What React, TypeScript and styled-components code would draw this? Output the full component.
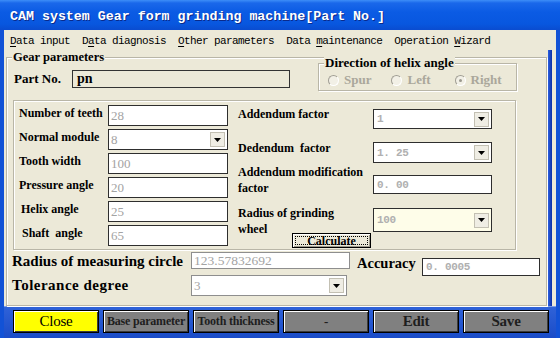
import React from 'react';
import styled, { createGlobalStyle } from 'styled-components';

const SERIF = `"Liberation Serif", "Times New Roman", serif`;
const MONO = `"Liberation Mono", "Courier New", monospace`;

const GlobalStyle = createGlobalStyle`
  html, body {
    margin: 0;
    padding: 0;
  }
  body {
    width: 560px;
    height: 338px;
    overflow: hidden;
    background: #1252d6;
  }
`;

const Window = styled.div`
  width: 560px;
  height: 338px;
  display: flex;
  flex-direction: column;
  background: #1252d6;
  overflow: hidden;
`;

const TitleBar = styled.div`
  height: 30px;
  flex: none;
  box-sizing: border-box;
  display: flex;
  align-items: center;
  padding: 3px 0 0 10px;
  background: linear-gradient(to bottom, #3d8ef8 0px, #1a68ea 3px, #0b5be4 12px, #0857df 24px, #0a4cd0 30px);
  font: bold 13.3px ${MONO};
  color: #fff;
  text-shadow: 1px 1px 0 #0a2a8a;
  white-space: pre;
`;

const Body = styled.div`
  flex: 1;
  display: flex;
  flex-direction: column;
  padding: 0 4px;
`;

const MenuBar = styled.div`
  height: 20px;
  flex: none;
  display: flex;
  align-items: center;
  gap: 12px;
  padding: 1px 0 0 6px;
  box-sizing: border-box;
  background: #ece9d8;
  font: 11px ${MONO};
  letter-spacing: -0.6px;
  color: #000;
  white-space: pre;
`;

const Key = styled.span`
  text-decoration: underline;
  text-underline-offset: 2px;
`;

const MainRow = styled.div`
  height: 256px;
  flex: none;
  display: flex;
`;

const FormPanel = styled.div`
  width: 544px;
  box-sizing: border-box;
  padding: 7px 1px 0 2px;
  background: #ece9d8;
`;

const EdgeStrip = styled.div`
  width: 4px;
  background: linear-gradient(to right, #2a5ee0, #0b2ea4);
`;

const EdgeGap = styled.div`
  width: 4px;
  background: #ece9d8;
`;

const GroupBox = styled.div<{ $w?: number; $h: number }>`
  position: relative;
  box-sizing: border-box;
  ${({ $w }) => ($w ? `width: ${$w}px;` : '')}
  height: ${({ $h }) => $h}px;
  border: 1px solid #b9b6a7;
  box-shadow: inset 1px 1px 0 #fff, 1px 1px 0 #fff;
`;

const Caption = styled.span<{ $size: number }>`
  position: absolute;
  top: -8px;
  left: 5px;
  padding: 0 1px;
  background: #ece9d8;
  font: bold ${({ $size }) => $size}px ${SERIF};
  line-height: 14px;
  color: #000;
  white-space: pre;
`;

const OuterBox = styled(GroupBox)`
  padding-left: 6px;
  display: flex;
  flex-direction: column;
`;

const TopRow = styled.div`
  height: 33px;
  display: flex;
  align-items: flex-start;
`;

const PartGroup = styled.div`
  display: flex;
  align-items: center;
  margin-top: 12px;
  margin-left: 1px;
`;

const PartLabel = styled.span`
  width: 58px;
  font: bold 13px ${SERIF};
  color: #000;
`;

const PartInput = styled.div`
  width: 218px;
  height: 18px;
  box-sizing: border-box;
  border: 1px solid #333;
  padding: 0 4px;
  background: #ece9d8;
  font: bold 14px ${SERIF};
  line-height: 16px;
  color: #000;
`;

const DirectionBox = styled(GroupBox)`
  margin: 5px 0 0 28px;
  padding: 6px 0 0 9px;
  display: flex;
  align-items: center;
  gap: 20px;
`;

const RadioItem = styled.span<{ $ml?: number }>`
  display: flex;
  align-items: center;
  gap: 5px;
  margin-left: ${({ $ml }) => $ml ?? 0}px;
  font: bold 13px ${SERIF};
  color: #aaa79b;
`;

const RadioCircle = styled.span<{ $checked?: boolean }>`
  width: 11px;
  height: 11px;
  box-sizing: border-box;
  border-radius: 50%;
  border: 1px solid;
  border-color: #a09e94 #fff #fff #a09e94;
  background: #f2f0e6;
  display: flex;
  align-items: center;
  justify-content: center;

  &::after {
    content: '';
    width: 3px;
    height: 3px;
    border-radius: 50%;
    background: ${({ $checked }) => ($checked ? '#9a988e' : 'transparent')};
  }
`;

const FieldsBox = styled(GroupBox)`
  margin-top: 9px;
  padding: 4px 0 0 5px;
  display: flex;
  align-items: flex-start;
`;

const LeftGrid = styled.div`
  display: grid;
  grid-template-columns: 89px 120px;
  grid-auto-rows: 21px;
  row-gap: 3px;
  align-items: start;
`;

const FieldLabel = styled.span<{ $indent?: number; $lh?: number; $mt?: number }>`
  display: block;
  margin-top: ${({ $mt }) => $mt ?? 0}px;
  padding-left: ${({ $indent }) => $indent ?? 0}px;
  font: bold 12px ${SERIF};
  line-height: ${({ $lh }) => $lh ?? 14}px;
  color: #000;
  white-space: pre;
`;

const TextBox = styled.div<{ $w: number; $h: number; $border?: string; $bg?: string }>`
  width: ${({ $w }) => $w}px;
  height: ${({ $h }) => $h}px;
  box-sizing: border-box;
  border: 1px solid ${({ $border }) => $border ?? '#2e2e2e'};
  background: ${({ $bg }) => $bg ?? '#fff'};
  display: flex;
  align-items: center;
  justify-content: space-between;
  padding-left: 2px;
  overflow: hidden;
`;

const SerifValue = styled.span<{ $size?: number }>`
  font: ${({ $size }) => $size ?? 13}px ${SERIF};
  color: #a3a3a3;
`;

const MonoValue = styled.span`
  font: bold 11px ${MONO};
  letter-spacing: -0.3px;
  color: #b0b0b0;
  padding-left: 1px;
`;

const DropButton = styled.span`
  width: 15px;
  height: 15px;
  margin-right: 2px;
  box-sizing: border-box;
  border: 1px solid #c3c0b3;
  background: #efede4;
  display: flex;
  align-items: center;
  justify-content: center;
  flex: none;
`;

const RightCol = styled.div`
  margin-left: 10px;
  display: flex;
  flex-direction: column;
`;

const RightRow = styled.div<{ $mt: number }>`
  margin-top: ${({ $mt }) => $mt}px;
  display: flex;
  align-items: flex-start;
`;

const RightLabelCell = styled.div`
  width: 135px;
`;

const ControlSlot = styled.div<{ $mt: number }>`
  margin-top: ${({ $mt }) => $mt}px;
`;

const CalcButton = styled.button`
  margin: -4px 0 0 54px;
  width: 79px;
  height: 15px;
  box-sizing: border-box;
  padding: 0;
  border: 1px solid #000;
  background: #ece9d8;
  box-shadow: inset 1px 1px 0 #fff, inset -1px -1px 0 #9d9a8c;
  outline: 1px dotted #000;
  outline-offset: -4px;
  font: bold 12px ${SERIF};
  line-height: 12px;
  color: #000;
`;

const BottomRow = styled.div<{ $mt: number }>`
  margin: ${({ $mt }) => $mt}px 0 0 -1px;
  display: flex;
  align-items: flex-start;
`;

const BigLabel = styled.span<{ $w: number; $mt?: number; $ml?: number; $size?: number; $ls?: number }>`
  width: ${({ $w }) => $w}px;
  margin-top: ${({ $mt }) => $mt ?? 0}px;
  margin-left: ${({ $ml }) => $ml ?? 0}px;
  font: bold ${({ $size }) => $size ?? 15}px ${SERIF};
  letter-spacing: ${({ $ls }) => $ls ?? 0}px;
  line-height: 17px;
  color: #000;
  white-space: pre;
`;

const AccuracySlot = styled.div`
  margin-top: 6px;
`;

const ButtonBar = styled.div`
  height: 32px;
  flex: none;
  display: flex;
  gap: 4px;
  padding: 4px 0 0 9px;
  box-sizing: border-box;
  background: linear-gradient(to bottom, #c9d6f2 0px, #2f62d8 1px, #1a4cc8 100%);
`;

const BarButton = styled.button<{ $yellow?: boolean; $size?: number; $bold?: boolean }>`
  width: 86px;
  height: 23px;
  box-sizing: border-box;
  padding: 0;
  border: 1px solid #000;
  background: ${({ $yellow }) => ($yellow ? '#ffff00' : '#808080')};
  box-shadow: inset 1px 1px 0 #fff, inset -1px -1px 0 #3c3c3c;
  font: ${({ $bold }) => ($bold ? 'bold' : 'normal')} ${({ $size }) => $size ?? 12}px ${SERIF};
  color: ${({ $yellow }) => ($yellow ? '#000' : '#1e1e1e')};
  white-space: nowrap;
  letter-spacing: -0.2px;
`;

const Arrow = () => (
  <svg width="7" height="4" viewBox="0 0 7 4">
    <polygon points="0,0 7,0 3.5,4" fill="#000" />
  </svg>
);

const Combo: React.FC<{ w: number; h: number; bg?: string; border?: string; children: React.ReactNode }> = ({
  w,
  h,
  bg,
  border,
  children,
}) => (
  <TextBox $w={w} $h={h} $bg={bg} $border={border}>
    {children}
    <DropButton>
      <Arrow />
    </DropButton>
  </TextBox>
);

const leftFields = [
  { label: 'Number of teeth', value: '28', combo: false, indent: 0 },
  { label: 'Normal module', value: '8', combo: true, indent: 0 },
  { label: 'Tooth width', value: '100', combo: false, indent: 0 },
  { label: 'Pressure angle', value: '20', combo: false, indent: 0 },
  { label: 'Helix angle', value: '25', combo: false, indent: 2 },
  { label: 'Shaft  angle', value: '65', combo: false, indent: 3 },
];

const buttons = [
  { text: 'Close', yellow: true, size: 15, bold: false },
  { text: 'Base parameter', size: 12, bold: true },
  { text: 'Tooth thickness', size: 12, bold: true },
  { text: '-', size: 13, bold: true },
  { text: 'Edit', size: 15, bold: true },
  { text: 'Save', size: 15, bold: true },
];

export default function App() {
  return (
    <Window>
      <GlobalStyle />
      <TitleBar>CAM system Gear form grinding machine[Part No.]</TitleBar>
      <Body>
        <MenuBar>
          <span>
            <Key>D</Key>ata input
          </span>
          <span>
            D<Key>a</Key>ta diagnosis
          </span>
          <span>
            <Key>O</Key>ther parameters
          </span>
          <span>
            Data <Key>m</Key>aintenance
          </span>
          <span>
            Operation <Key>W</Key>izard
          </span>
        </MenuBar>

        <MainRow>
          <FormPanel>
            <OuterBox $h={249}>
              <Caption $size={12.5}>Gear parameters</Caption>

              <TopRow>
                <PartGroup>
                  <PartLabel>Part No.</PartLabel>
                  <PartInput>pn</PartInput>
                </PartGroup>
                <DirectionBox $w={199} $h={28}>
                  <Caption $size={13}>Direction of helix angle</Caption>
                  <RadioItem>
                    <RadioCircle />
                    Spur
                  </RadioItem>
                  <RadioItem>
                    <RadioCircle />
                    Left
                  </RadioItem>
                  <RadioItem $ml={4}>
                    <RadioCircle $checked />
                    Right
                  </RadioItem>
                </DirectionBox>
              </TopRow>

              <FieldsBox $w={503} $h={150}>
                <LeftGrid>
                  {leftFields.map((f) => (
                    <React.Fragment key={f.label}>
                      <FieldLabel $indent={f.indent} $mt={1}>
                        {f.label}
                      </FieldLabel>
                      {f.combo ? (
                        <Combo w={120} h={21}>
                          <SerifValue>{f.value}</SerifValue>
                        </Combo>
                      ) : (
                        <TextBox $w={120} $h={21}>
                          <SerifValue>{f.value}</SerifValue>
                        </TextBox>
                      )}
                    </React.Fragment>
                  ))}
                </LeftGrid>

                <RightCol>
                  <RightRow $mt={2}>
                    <RightLabelCell>
                      <FieldLabel>Addendum factor</FieldLabel>
                    </RightLabelCell>
                    <ControlSlot $mt={2}>
                      <Combo w={119} h={20}>
                        <MonoValue>1</MonoValue>
                      </Combo>
                    </ControlSlot>
                  </RightRow>
                  <RightRow $mt={12}>
                    <RightLabelCell>
                      <FieldLabel>Dedendum  factor</FieldLabel>
                    </RightLabelCell>
                    <ControlSlot $mt={1}>
                      <Combo w={119} h={21}>
                        <MonoValue>1. 25</MonoValue>
                      </Combo>
                    </ControlSlot>
                  </RightRow>
                  <RightRow $mt={1}>
                    <RightLabelCell>
                      <FieldLabel $lh={16}>
                        Addendum modification
                        <br />
                        factor
                      </FieldLabel>
                    </RightLabelCell>
                    <ControlSlot $mt={11}>
                      <TextBox $w={119} $h={19}>
                        <MonoValue>0. 00</MonoValue>
                      </TextBox>
                    </ControlSlot>
                  </RightRow>
                  <RightRow $mt={9}>
                    <RightLabelCell>
                      <FieldLabel $lh={16}>
                        Radius of grinding
                        <br />
                        wheel
                      </FieldLabel>
                    </RightLabelCell>
                    <ControlSlot $mt={3}>
                      <Combo w={119} h={24} bg="#fefde9">
                        <MonoValue>100</MonoValue>
                      </Combo>
                    </ControlSlot>
                  </RightRow>
                  <CalcButton>Calculate</CalcButton>
                </RightCol>
              </FieldsBox>

              <BottomRow $mt={2}>
                <BigLabel $w={179} $mt={1}>
                  Radius of measuring circle
                </BigLabel>
                <TextBox $w={159} $h={17} $border="#8e8e8e">
                  <SerifValue $size={13.5}>123.57832692</SerifValue>
                </TextBox>
                <BigLabel $w={65} $mt={3} $ml={7} $size={14.5}>
                  Accuracy
                </BigLabel>
                <AccuracySlot>
                  <TextBox $w={118} $h={18}>
                    <MonoValue>0. 0005</MonoValue>
                  </TextBox>
                </AccuracySlot>
              </BottomRow>

              <BottomRow $mt={-1}>
                <BigLabel $w={179} $mt={2} $ls={0.5}>
                  Tolerance degree
                </BigLabel>
                <Combo w={156} h={21} border="#8e8e8e">
                  <SerifValue>3</SerifValue>
                </Combo>
              </BottomRow>
            </OuterBox>
          </FormPanel>
          <EdgeStrip />
          <EdgeGap />
        </MainRow>

        <ButtonBar>
          {buttons.map((b) => (
            <BarButton key={b.text} $yellow={b.yellow} $size={b.size} $bold={b.bold}>
              {b.text}
            </BarButton>
          ))}
        </ButtonBar>
      </Body>
    </Window>
  );
}
